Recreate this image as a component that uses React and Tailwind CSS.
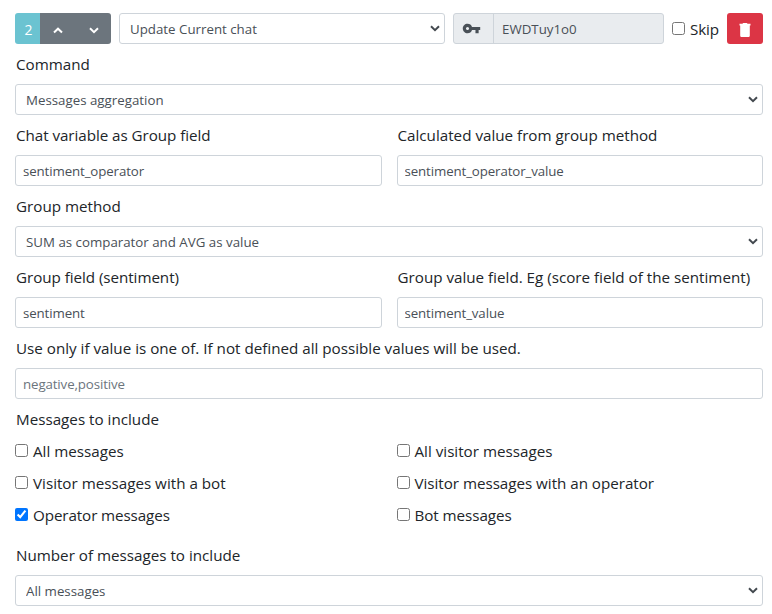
import { MdVpnKey } from "react-icons/md";

const control =
  "block h-[31px] w-full rounded-[3px] border border-[#ced4da] leading-[21px] text-[#495057] placeholder:text-[#6c757d] placeholder:opacity-100";

function Chevron({ up = false, className = "" }) {
  return (
    <svg viewBox="0 0 10 7" width="10" height="7" fill="none" stroke="currentColor" className={className}>
      <path d={up ? "M1 5.5 5 1.7 9 5.5" : "M1 1.3 5 5.1 9 1.3"} strokeWidth="2" />
    </svg>
  );
}

function TrashIcon() {
  return (
    <svg viewBox="0 0 12 14" width="12" height="14" fill="currentColor">
      <path d="M.5.8h2.9L4.2 0h3.6l.8.8h2.9v1.7h-.7v9.9c0 .9-.7 1.6-1.6 1.6H2.8c-.9 0-1.6-.7-1.6-1.6V2.5H.5z" />
    </svg>
  );
}

function Select({ value }) {
  return (
    <div className="relative">
      <select
        className={`${control} appearance-none bg-white pt-px pr-5 pb-0 pl-2.5 text-[13.3px]`}
        defaultValue={value}
      >
        <option>{value}</option>
      </select>
      <Chevron className="pointer-events-none absolute top-3 right-[5px] text-[#43494f]" />
    </div>
  );
}

function Input({ value, placeholder }) {
  return (
    <input
      type="text"
      className={`${control} bg-white px-[7px] py-0.5 text-[13.3px] tracking-[-0.12px]`}
      defaultValue={value}
      placeholder={placeholder}
    />
  );
}

function Field({ label, spacing = "", children }) {
  return (
    <div className="flex flex-col gap-2">
      <label className="h-6 pl-px leading-6 whitespace-nowrap">
        <span className={spacing}>{label}</span>
      </label>
      {children}
    </div>
  );
}

function Check({ label, checked, spacing = "" }) {
  return (
    <label className="flex h-6 items-start gap-[5px] leading-6 whitespace-nowrap">
      <input type="checkbox" className="mt-[5px] size-[13px] shrink-0" defaultChecked={checked} />
      <span className={spacing}>{label}</span>
    </label>
  );
}

export default function App() {
  return (
    <div className="flex h-[614px] w-[772px] flex-col gap-2 overflow-hidden bg-white pt-[13px] pr-[9px] pl-[15px] font-['Open_Sans','Noto_Sans',sans-serif] text-[15.2px] text-[#212529]">
      <div className="flex h-[31px] gap-2">
        <div className="flex w-24 shrink-0 overflow-hidden rounded-[3px] text-white">
          <span className="flex w-[25px] items-center justify-center bg-[#6bc3d1] pt-px pl-0.5 text-[14px]">2</span>
          <button className="flex w-9 items-center justify-center bg-[#6c757d] pt-[3px]">
            <Chevron up />
          </button>
          <button className="flex w-[35px] items-center justify-center bg-[#6c757d] pt-[3px]">
            <Chevron />
          </button>
        </div>
        <div className="w-[326px] shrink-0">
          <Select value="Update Current chat" />
        </div>
        <div className="flex w-[211px] shrink-0 overflow-hidden rounded-[3px] border border-[#ced4da] bg-[#e9ecef] text-[13.3px] text-[#495057]">
          <span className="flex w-10 items-center border-r border-[#ced4da] pb-px pl-[7.5px]">
            <MdVpnKey size={19} />
          </span>
          <span className="flex items-center pt-0.5 pl-2">
            <span>EWDTuy1o0</span>
          </span>
        </div>
        <div className="w-[47px] shrink-0 pt-1">
          <Check label="Skip" spacing="tracking-[-0.15px]" />
        </div>
        <button className="flex w-9 shrink-0 items-center justify-center rounded-[3px] bg-[#dc3545] pt-[3px] text-white">
          <TrashIcon />
        </button>
      </div>

      <Field label="Command">
        <Select value="Messages aggregation" />
      </Field>
      <div className="grid grid-cols-2 gap-[15px]">
        <Field label="Chat variable as Group field" spacing="tracking-[-0.05px]">
          <Input value="sentiment_operator" />
        </Field>
        <Field label="Calculated value from group method">
          <Input value="sentiment_operator_value" />
        </Field>
      </div>
      <Field label="Group method">
        <Select value="SUM as comparator and AVG as value" />
      </Field>
      <div className="grid grid-cols-2 gap-[15px]">
        <Field label="Group field (sentiment)" spacing="tracking-[-0.05px]">
          <Input value="sentiment" />
        </Field>
        <Field label="Group value field. Eg (score field of the sentiment)">
          <Input value="sentiment_value" />
        </Field>
      </div>
      <Field label="Use only if value is one of. If not defined all possible values will be used.">
        <Input placeholder="negative,positive" />
      </Field>
      <Field label="Messages to include">
        <div className="grid grid-cols-2 gap-x-[15px] gap-y-2">
          <Check label="All messages" />
          <Check label="All visitor messages" />
          <Check label="Visitor messages with a bot" />
          <Check label="Visitor messages with an operator" spacing="tracking-[-0.03px]" />
          <Check label="Operator messages" checked spacing="tracking-[-0.1px]" />
          <Check label="Bot messages" spacing="tracking-[-0.05px]" />
        </div>
      </Field>
      <div className="pt-2">
        <Field label="Number of messages to include">
          <Select value="All messages" />
        </Field>
      </div>
    </div>
  );
}
